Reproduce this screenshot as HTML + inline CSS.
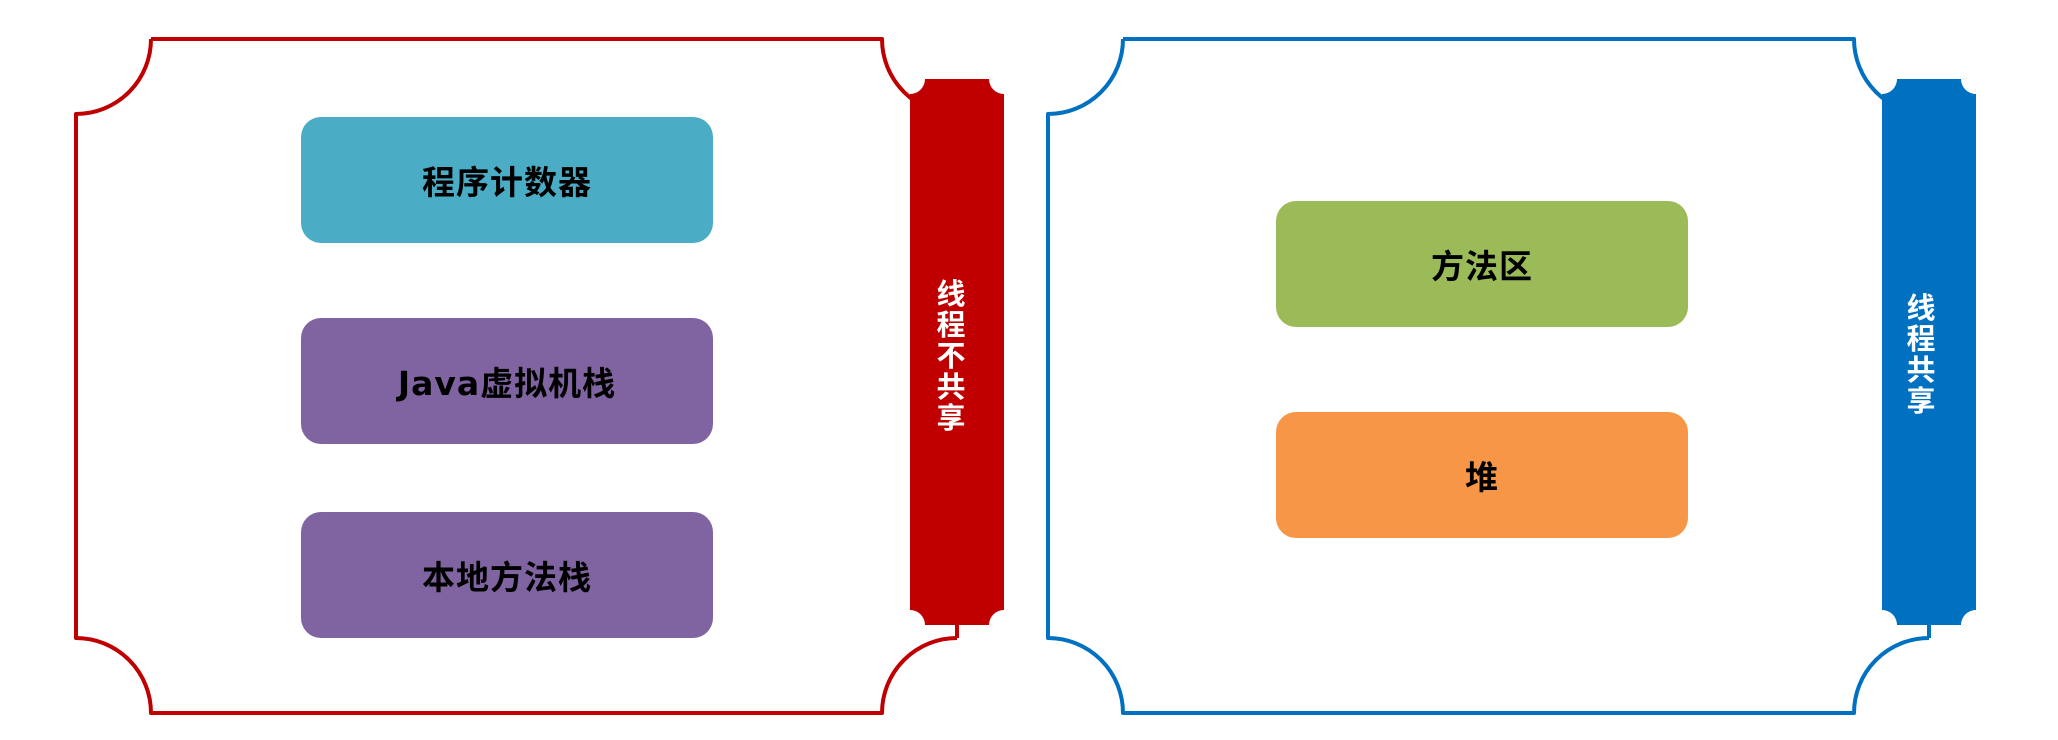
<!DOCTYPE html>
<html><head><meta charset="utf-8"><style>
html,body{margin:0;padding:0;background:#fff;width:2058px;height:740px;overflow:hidden}
.box{position:absolute;width:412px;height:126px;border-radius:20px;display:flex;align-items:center;justify-content:center;font-family:"DejaVu Sans","Noto Sans CJK SC",sans-serif;font-weight:bold;font-size:33px;letter-spacing:1px;color:#000}
.vt{position:absolute;width:40px;font-family:"DejaVu Sans","Noto Sans CJK SC",sans-serif;font-weight:bold;font-size:29px;line-height:31px;color:#fff;text-align:center}
</style></head><body>
<svg width="2058" height="740" style="position:absolute;left:0;top:0">
<g fill="none" stroke="#c00000" stroke-width="4" stroke-linejoin="round">
<path d="M151 39 H882 A75 75 0 0 0 957 114 M957 638 A75 75 0 0 0 882 713 H151 A75 75 0 0 0 76 638 V114 A75 75 0 0 0 151 39 M957 638 V620"/>
<path d="M925 79 H989 A15 15 0 0 0 1004 94 V610 A15 15 0 0 0 989 625 H925 A15 15 0 0 0 910 610 V94 A15 15 0 0 0 925 79 Z" fill="#c00000" stroke="none"/>
</g>
<g fill="none" stroke="#0070c0" stroke-width="4" stroke-linejoin="round" transform="translate(972,0)">
<path d="M151 39 H882 A75 75 0 0 0 957 114 M957 638 A75 75 0 0 0 882 713 H151 A75 75 0 0 0 76 638 V114 A75 75 0 0 0 151 39 M957 638 V620"/>
<path d="M925 79 H989 A15 15 0 0 0 1004 94 V610 A15 15 0 0 0 989 625 H925 A15 15 0 0 0 910 610 V94 A15 15 0 0 0 925 79 Z" fill="#0070c0" stroke="none"/>
</g>
</svg>
<div class="box" style="left:301px;top:117px;background:#4bacc6">程序计数器</div>
<div class="box" style="left:301px;top:318px;background:#8064a2">Java虚拟机栈</div>
<div class="box" style="left:301px;top:512px;background:#8064a2">本地方法栈</div>
<div class="box" style="left:1276px;top:201px;background:#9bbb59">方法区</div>
<div class="box" style="left:1276px;top:412px;background:#f79646">堆</div>
<div class="vt" style="left:931px;top:279px">线<br>程<br>不<br>共<br>享</div>
<div class="vt" style="left:1901px;top:293px">线<br>程<br>共<br>享</div>
</body></html>
